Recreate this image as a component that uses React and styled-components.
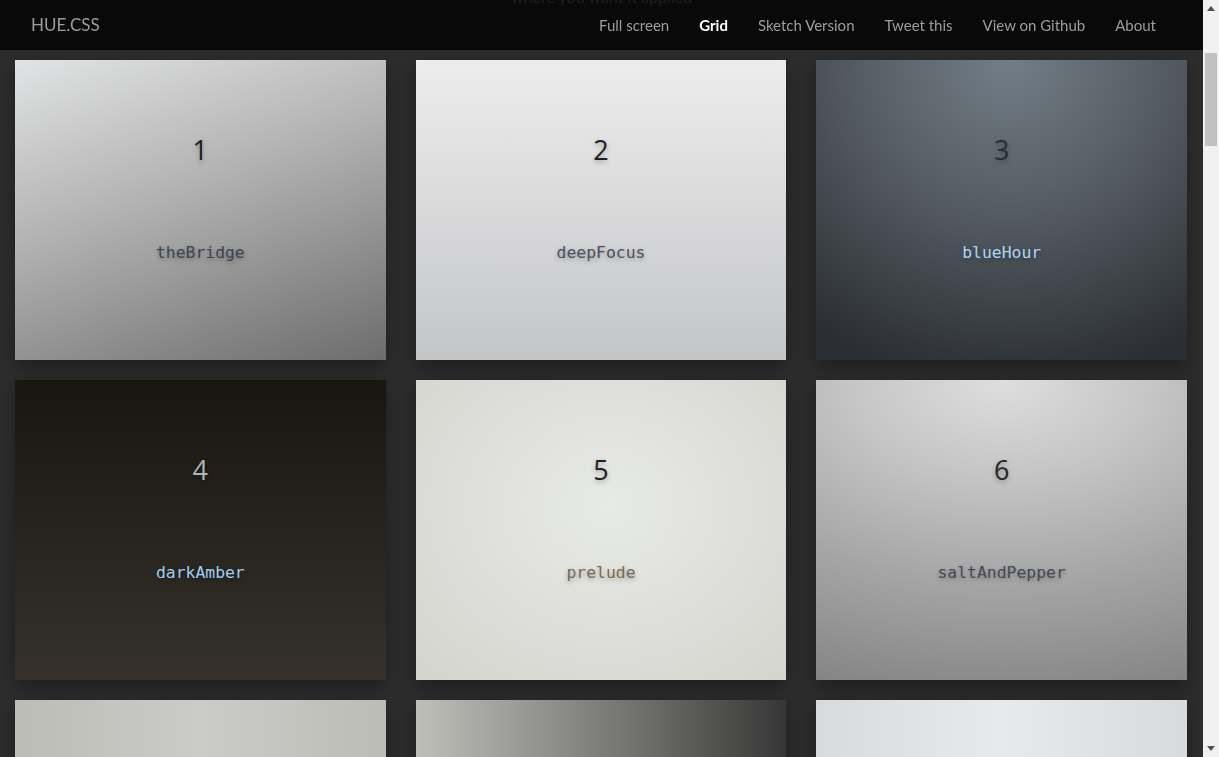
import React, { useLayoutEffect, useRef } from "react";
import styled, { createGlobalStyle } from "styled-components";

const Global = createGlobalStyle`
  html, body { margin: 0; padding: 0; height: 100%; overflow: hidden; }
  body {
    background: #2d2d2d;
    font-family: "Lato", "Open Sans", sans-serif;
    color: #ccc;
  }
`;

const Shell = styled.div`
  display: flex;
  height: 100vh;
  overflow: hidden;
`;

const Viewport = styled.div`
  flex: 1;
  min-width: 0;
  overflow: hidden;
  position: relative;
`;

const NavBar = styled.nav`
  position: sticky;
  top: 0;
  height: 50px;
  background: rgba(5, 5, 5, 0.88);
  display: flex;
  align-items: center;
  justify-content: space-between;
  padding: 0 32px 0 16px;
  z-index: 10;
`;

const Brand = styled.a`
  font-size: 17px;
  color: #9d9d9d;
  padding: 0 15px;
  line-height: 50px;
  text-decoration: none;
`;

const NavList = styled.ul`
  display: flex;
  list-style: none;
  margin: 0;
  padding: 0;
`;

const NavLink = styled.a`
  display: block;
  padding: 0 15px;
  line-height: 50px;
  font-size: 15px;
  text-decoration: none;
  color: ${(p) => (p.$active ? "#fff" : "#9d9d9d")};
  font-weight: ${(p) => (p.$active ? 700 : 400)};
`;

const Intro = styled.header`
  height: 303px;
  box-sizing: border-box;
  display: flex;
  flex-direction: column;
  justify-content: flex-end;
  align-items: center;
  padding-bottom: 52px;
  text-align: center;
`;

const IntroTitle = styled.h1`
  margin: 0 0 20px;
  font-size: 48px;
  font-weight: 300;
  color: #ddd;
`;

const IntroText = styled.p`
  margin: 0;
  font-size: 16px;
  line-height: 22px;
  color: #ccc;
`;

const Grid = styled.main`
  display: grid;
  grid-template-columns: repeat(3, 1fr);
  column-gap: 30px;
  row-gap: 20px;
  padding: 0 16px 40px 15px;
`;

const Card = styled.section`
  height: 300px;
  display: flex;
  flex-direction: column;
  align-items: center;
  padding-top: 72px;
  box-sizing: border-box;
  background: ${(p) => p.$bg};
  box-shadow: 0 6px 18px rgba(0, 0, 0, 0.35);
`;

const Num = styled.div`
  font-family: "Open Sans", "Noto Sans", sans-serif;
  font-size: 27px;
  line-height: 36px;
  color: ${(p) => p.$color};
  text-shadow: 0 2px 5px rgba(0, 0, 0, 0.3);
`;

const Name = styled.code`
  margin-top: 74px;
  font-family: "DejaVu Sans Mono", "Liberation Mono", monospace;
  font-size: 16.4px;
  line-height: 22px;
  color: ${(p) => p.$color};
  text-shadow: 0 2px 5px rgba(0, 0, 0, 0.3);
`;

const ScrollTrack = styled.div`
  width: 16px;
  flex: none;
  background: #f1f1f1;
  display: flex;
  flex-direction: column;
  align-items: center;
`;

const ArrowBtn = styled.div`
  height: 17px;
  width: 16px;
  display: flex;
  align-items: center;
  justify-content: center;
  flex: none;
`;

const Rail = styled.div`
  flex: 1;
  width: 100%;
  display: flex;
  flex-direction: column;
  align-items: center;
`;

const Thumb = styled.div`
  margin-top: 36px;
  width: 12px;
  height: 93px;
  background: #c1c1c1;
`;

const Arrow = ({ down }) => (
  <svg width="8" height="5" viewBox="0 0 8 5">
    <path d={down ? "M0 0 H8 L4 5 Z" : "M0 5 H8 L4 0 Z"} fill="#505050" />
  </svg>
);

const cards = [
  { name: "theBridge", bg: "linear-gradient(160deg, #e2e3e4 0%, #b0b0b0 45%, #6d6d6d 100%)", num: "#1f1f1f", label: "#3c4352" },
  { name: "deepFocus", bg: "linear-gradient(to bottom, #ededed 0%, #c4c5c7 100%)", num: "#1f1f1f", label: "#4c4f60" },
  { name: "blueHour", bg: "radial-gradient(ellipse 90% 110% at 52% 0%, #727d85 0%, #596168 40%, #2a2d33 100%)", num: "#2a2e33", label: "#acd5f5" },
  { name: "darkAmber", bg: "linear-gradient(to bottom, #17160f 0%, #26241e 50%, #36312b 100%)", num: "#b2b2b2", label: "#a0cdf2" },
  { name: "prelude", bg: "radial-gradient(ellipse 75% 80% at 52% 42%, #e8eae6 0%, #dcddd8 60%, #d3d4cd 100%)", num: "#1f1f1f", label: "#7a6a52" },
  { name: "saltAndPepper", bg: "radial-gradient(ellipse 180% 140% at 50% 0%, #dedede 0%, #c6c6c6 22%, #a6a6a6 48%, #6a6a6a 100%)", num: "#262626", label: "#434955" },
  { name: "morningFog", bg: "linear-gradient(to right, #bbbcb6 0%, #cbccc7 50%, #bbbcb6 100%)", num: "#222", label: "#555" },
  { name: "ironSide", bg: "linear-gradient(to right, #bebfb9 0%, #9e9f9a 25%, #70716c 60%, #363636 100%)", num: "#222", label: "#ddd" },
  { name: "paperWhite", bg: "linear-gradient(to right, #d9dade 0%, #e8e9eb 50%, #d9dade 100%)", num: "#222", label: "#555" },
];

const links = ["Full screen", "Grid", "Sketch Version", "Tweet this", "View on Github", "About"];

export default function App() {
  const viewRef = useRef(null);
  useLayoutEffect(() => {
    if (viewRef.current) viewRef.current.scrollTop = 293;
  }, []);

  return (
    <>
      <Global />
      <Shell>
        <Viewport ref={viewRef}>
          <NavBar>
            <Brand href="#">HUE.CSS</Brand>
            <NavList>
              {links.map((l) => (
                <li key={l}>
                  <NavLink href="#" $active={l === "Grid"}>{l}</NavLink>
                </li>
              ))}
            </NavList>
          </NavBar>
          <Intro>
            <IntroTitle>HUE.CSS</IntroTitle>
            <IntroText>Simple, subtle gradients for your backgrounds. Just add the class to the element</IntroText>
            <IntroText>where you want it applied</IntroText>
          </Intro>
          <Grid>
            {cards.map((c, i) => (
              <Card key={i} $bg={c.bg}>
                <Num $color={c.num}>{i + 1}</Num>
                <Name $color={c.label}>{c.name}</Name>
              </Card>
            ))}
          </Grid>
        </Viewport>
        <ScrollTrack>
          <ArrowBtn><Arrow /></ArrowBtn>
          <Rail><Thumb /></Rail>
          <ArrowBtn><Arrow down /></ArrowBtn>
        </ScrollTrack>
      </Shell>
    </>
  );
}
